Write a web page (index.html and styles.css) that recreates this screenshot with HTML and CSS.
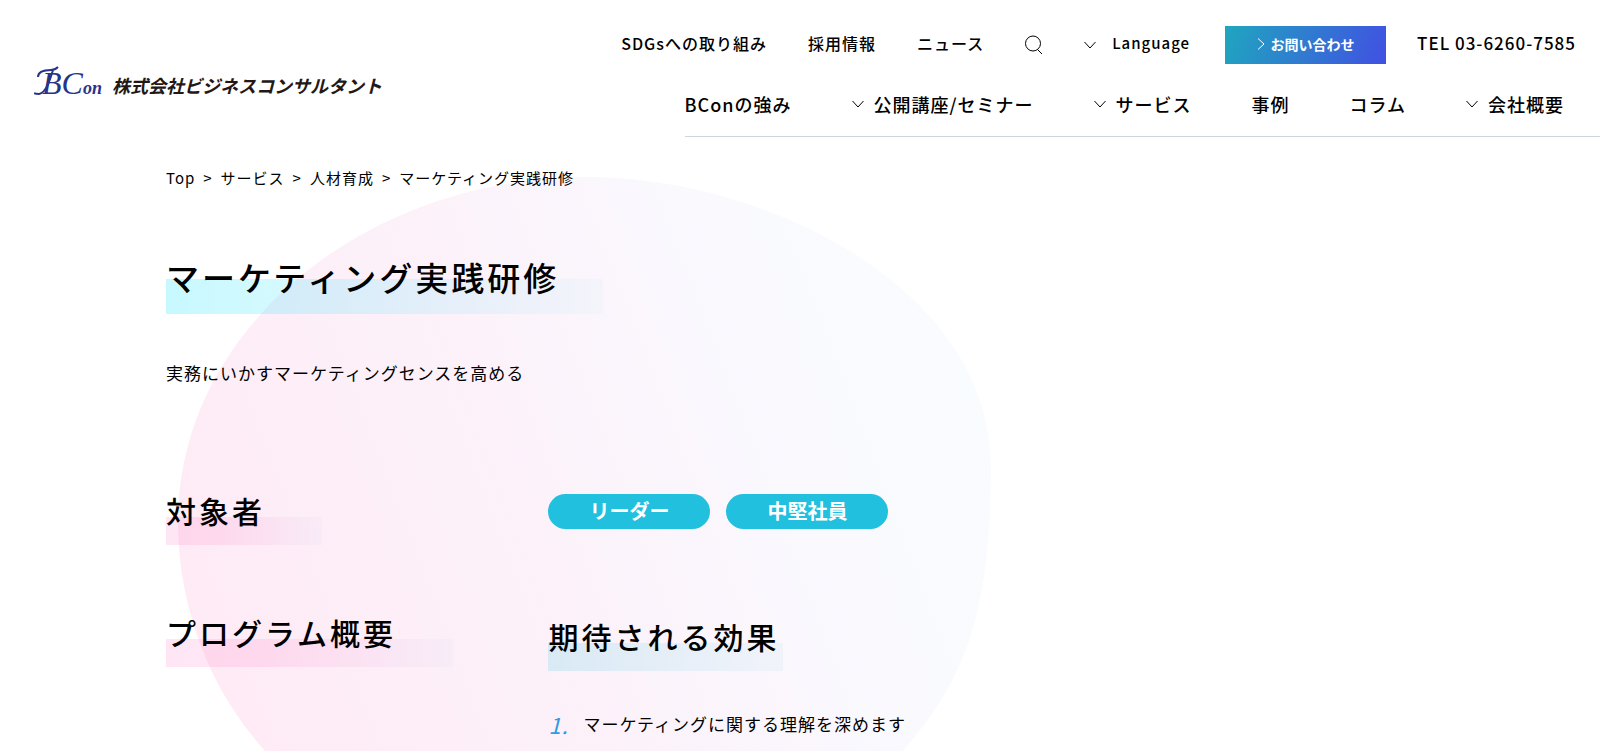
FILE: index.html
```html
<!DOCTYPE html>
<html lang="ja">
<head>
	<meta charset="utf-8">
	<title>マーケティング実践研修</title>
	<link rel="stylesheet" href="styles.css">
</head>
<body>
	<div class="backdrop" aria-hidden="true">
		<svg class="blob" viewBox="0 0 814 690">
			<defs>
				<linearGradient id="blob-fill" gradientUnits="userSpaceOnUse" x1="40" y1="460" x2="780" y2="180">
					<stop offset="0" stop-color="#feebf5"/>
					<stop offset="0.45" stop-color="#fcf2fa"/>
					<stop offset="0.75" stop-color="#f9f9fe"/>
					<stop offset="1" stop-color="#f9fcff"/>
				</linearGradient>
			</defs>
			<path fill="url(#blob-fill)" d="M408 0C590 0 813 112 813 290C813 440 785 505 725 574C660 650 560 690 420 690C270 690 160 650 87 574C25 505 0 420 0 345C0 150 190 0 408 0Z"/>
		</svg>
	</div>

	<header class="header">
		<a class="logo" href="#">
			<span class="logo-mark">
				<svg class="logo-swash" width="30" height="30" viewBox="0 0 30 30"><path d="M4 11C4 6 9 4 17 4C20 4 22 3 24 1M19 4C16 14 12 27 5 28C3 28 1 28 0 27"/></svg>
				BC<span class="logo-on">on</span>
			</span>
			<span class="logo-name">株式会社ビジネスコンサルタント</span>
		</a>
		<div class="header-nav">
			<nav class="sub-nav">
				<a href="#">SDGsへの取り組み</a>
				<a href="#">採用情報</a>
				<a href="#">ニュース</a>
				<button class="search" type="button" aria-label="検索">
					<svg width="18" height="20" viewBox="0 0 18 20"><circle cx="8" cy="8.5" r="7.5"/><path d="M12.5 14.5L17 19"/></svg>
				</button>
				<button class="language" type="button">
					<svg class="chevron" width="12" height="8" viewBox="0 0 12 8"><path d="M.5 1L6 7L11.500 1"/></svg>
					<span>Language</span>
				</button>
				<a class="contact" href="#">
					<svg class="chevron" width="8" height="12" viewBox="0 0 8 12"><path d="M1 .5L7 6L1 11.500"/></svg>
					お問い合わせ
				</a>
				<a class="tel" href="tel:0362607585">TEL 03-6260-7585</a>
			</nav>
			<nav class="main-nav">
				<a href="#">BConの強み</a>
				<a href="#">
					<svg class="chevron" width="12" height="8" viewBox="0 0 12 8"><path d="M.5 1L6 7L11.500 1"/></svg>
					公開講座/セミナー
				</a>
				<a href="#">
					<svg class="chevron" width="12" height="8" viewBox="0 0 12 8"><path d="M.5 1L6 7L11.500 1"/></svg>
					サービス
				</a>
				<a href="#">事例</a>
				<a href="#">コラム</a>
				<a href="#">
					<svg class="chevron" width="12" height="8" viewBox="0 0 12 8"><path d="M.5 1L6 7L11.500 1"/></svg>
					会社概要
				</a>
			</nav>
		</div>
	</header>

	<main class="container">
		<nav class="breadcrumb">
			<a href="#">Top</a>
			<span>&gt;</span>
			<a href="#">サービス</a>
			<span>&gt;</span>
			<a href="#">人材育成</a>
			<span>&gt;</span>
			<a href="#">マーケティング実践研修</a>
		</nav>

		<h1 class="page-title">マーケティング実践研修</h1>
		<p class="lead">実務にいかすマーケティングセンスを高める</p>

		<section class="row">
			<div class="row-head">
				<h2 class="section-title">対象者</h2>
			</div>
			<ul class="tags">
				<li>リーダー</li>
				<li>中堅社員</li>
			</ul>
		</section>

		<section class="row">
			<div class="row-head">
				<h2 class="section-title">プログラム概要</h2>
			</div>
			<div class="row-body">
				<h3 class="effect-title">期待される効果</h3>
				<ol class="effects">
					<li>マーケティングに関する理解を深めます</li>
				</ol>
			</div>
		</section>
	</main>
</body>
</html>
```
FILE: styles.css
```css
* {
	box-sizing: border-box;
}

body {
	margin: 0;
	position: relative;
	min-height: 100vh;
	background: #fff;
	color: #000;
	font-family: "Noto Sans CJK JP", sans-serif;
	font-size: 17px;
	letter-spacing: 1px;
}

a {
	color: inherit;
	text-decoration: none;
}

button {
	padding: 0;
	border: none;
	background: none;
	color: inherit;
	font: inherit;
	letter-spacing: inherit;
	cursor: pointer;
}

svg {
	display: block;
	flex: none;
}

/* background shape behind the content */
.backdrop {
	position: absolute;
	inset: 0;
	z-index: -1;
	overflow: hidden;
}

.blob {
	width: 814px;
	margin: 177px 0 0 178px;
}

/* header */
.header {
	display: flex;
	justify-content: space-between;
}

.logo {
	display: flex;
	align-items: center;
	gap: 10px;
	height: 36px;
	margin: 67px 0 0 34px;
	letter-spacing: 0;
	white-space: nowrap;
}

.logo-mark {
	position: relative;
	padding-left: 8px;
	color: #26348b;
	font-family: "Liberation Serif", serif;
	font-style: italic;
	font-size: 32px;
	line-height: 36px;
}

.logo-swash {
	position: absolute;
	top: 1px;
	left: 0;
	fill: none;
	stroke: currentColor;
	stroke-width: 2;
}

.logo-on {
	font-size: 18px;
	font-weight: 700;
}

.logo-name {
	color: #231815;
	font-size: 18px;
	font-style: italic;
	font-weight: 700;
}

.header-nav {
	display: flex;
	flex-direction: column;
	align-items: flex-end;
	padding-top: 26px;
	white-space: nowrap;
}

.sub-nav {
	display: flex;
	align-items: center;
	gap: 41px;
	height: 38px;
	padding-right: 24px;
	font-size: 16px;
	font-weight: 500;
}

.sub-nav a,
.language span {
	padding-bottom: 5px;
}

.search svg,
.chevron {
	fill: none;
	stroke: currentColor;
}

.language {
	display: flex;
	align-items: center;
	gap: 16px;
	font-size: 15px;
}

.sub-nav .contact {
	display: flex;
	align-items: center;
	justify-content: center;
	gap: 6px;
	width: 161px;
	height: 38px;
	margin: 0 -10px 0 -6px;
	padding-bottom: 2px;
	background: linear-gradient(110deg, #1fa6bf, #4150e2);
	color: #fff;
	font-size: 14px;
	font-weight: 700;
	letter-spacing: 0;
}

.tel {
	font-size: 17px;
}

.main-nav {
	display: flex;
	gap: 60px;
	padding: 23px 36px 15px 0;
	border-bottom: 1px solid #ccd6dd;
	font-size: 18px;
	font-weight: 500;
	line-height: 34px;
}

.main-nav a {
	display: flex;
	align-items: center;
	gap: 10px;
}

/* content */
.container {
	max-width: 1268px;
	margin: 0 auto;
}

.breadcrumb {
	display: flex;
	gap: 8px;
	margin-top: 29px;
	font-size: 15px;
	line-height: 24px;
}

.page-title,
.section-title,
.effect-title {
	display: table;
	margin: 0;
	background-position: left bottom;
	background-repeat: no-repeat;
	font-weight: 500;
}

.page-title {
	margin-top: 54px;
	padding: 0 44px 4px 0;
	background-image: linear-gradient(90deg, rgba(0, 225, 255, 0.22), rgba(190, 225, 240, 0.1));
	background-size: 100% 35px;
	font-size: 33px;
	letter-spacing: 3px;
	line-height: 66px;
}

.lead {
	margin: 43px 0 92px;
	line-height: 32px;
}

.row {
	display: flex;
	gap: 2px;
}

.row + .row {
	margin-top: 58px;
}

.row-head {
	width: 30%;
}

.section-title,
.effect-title {
	padding-bottom: 6px;
	background-size: 100% 28px;
	font-size: 30px;
	letter-spacing: 3px;
	line-height: 58px;
}

.section-title {
	padding-right: 57px;
	background-image: linear-gradient(90deg, rgba(255, 140, 205, 0.22), rgba(255, 140, 205, 0.2) 35%, rgba(225, 225, 245, 0.2));
}

.effect-title {
	margin-top: 4px;
	padding-right: 4px;
	background-image: linear-gradient(90deg, rgba(0, 190, 220, 0.14), rgba(160, 210, 230, 0.1));
}

.tags {
	display: flex;
	gap: 16px;
	margin: 13px 0 0;
	padding: 0;
	list-style: none;
}

.tags li {
	height: 35px;
	padding: 0 41px;
	border-radius: 18px;
	background: #22c0df;
	color: #fff;
	font-size: 20px;
	font-weight: 700;
	letter-spacing: 0;
	line-height: 34px;
}

.effects {
	margin: 37px 0 0;
	padding: 0;
	list-style: none;
	counter-reset: effect;
	line-height: 32px;
}

.effects li {
	display: flex;
	counter-increment: effect;
}

.effects li::before {
	content: counter(effect) ".";
	width: 35px;
	color: #2d9be6;
	font-size: 22px;
	font-style: italic;
	font-weight: 400;
}
```
